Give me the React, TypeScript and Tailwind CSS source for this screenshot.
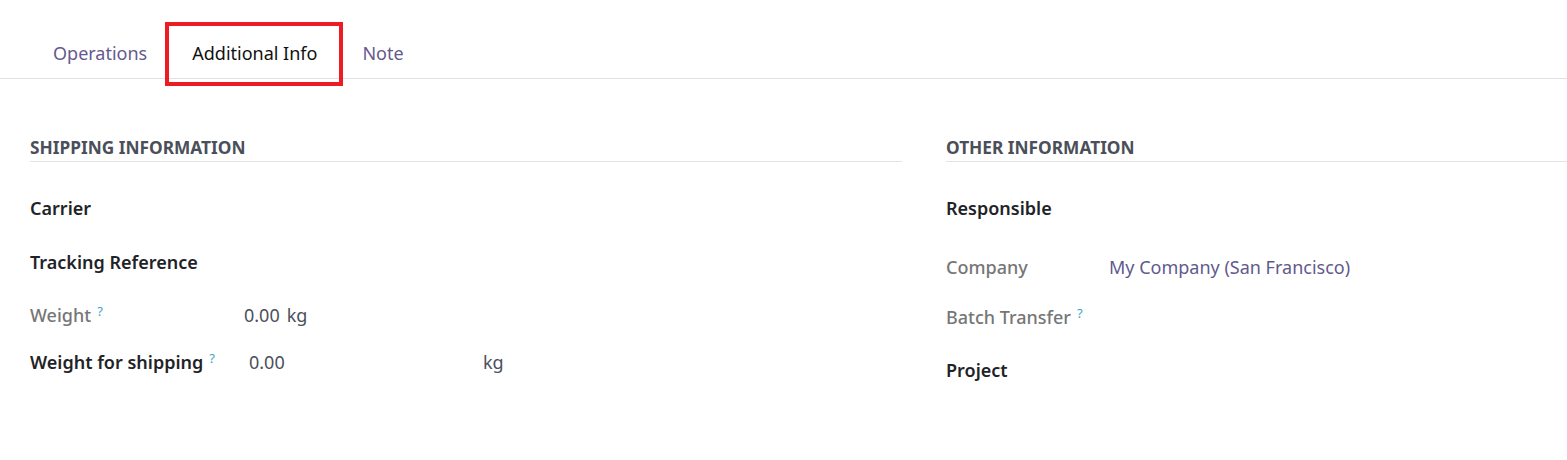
import React from "react";

function Help() {
  return <sup className="ml-[6px] text-[13px] font-normal text-[#3fa3c9]">?</sup>;
}

export default function App() {
  return (
    <div className="relative w-[1567px] h-[460px] overflow-hidden bg-white font-['Noto_Sans',sans-serif] text-[18px]">
      {/* Tabs */}
      <div className="flex h-[79px] items-end border-b border-[#dee2e6] pl-[31px]">
        <div className="flex h-[50px] items-center px-[22px] text-[18px] text-[#65598c]">Operations</div>
        <div className="flex h-[50px] items-center px-[23px] text-[18px] text-[#111111]">Additional Info</div>
        <div className="flex h-[50px] items-center px-[22px] text-[18px] text-[#65598c]">Note</div>
      </div>
      {/* annotation box */}
      <div className="absolute left-[165px] top-[22px] h-[64px] w-[178px] border-4 border-[#ed1c24]" />

      <div className="grid grid-cols-[872px_1fr] gap-x-[44px] pl-[30px] pt-[56px]">
        {/* Shipping */}
        <div>
          <div className="border-b border-[#e2e4e8] pb-px pt-px text-[17.3px] font-bold leading-6 text-[#4a4f59]">
            SHIPPING INFORMATION
          </div>
          <div className="mt-[34px] flex h-6 items-center leading-6 font-semibold text-[#1f2328]">Carrier</div>
          <div className="mt-[30px] flex h-6 items-center leading-6 font-semibold text-[#1f2328]">Tracking Reference</div>
          <div className="mt-[29px] flex h-6 items-center leading-6">
            <div className="w-[214px] font-medium text-[#767676]">
              Weight
              <Help />
            </div>
            <div className="text-[#4b4f5c]">
              0.00<span className="ml-[7px]">kg</span>
            </div>
          </div>
          <div className="mt-[23px] flex h-6 items-center leading-6">
            <div className="w-[219px] font-semibold text-[#1f2328]">
              Weight for shipping
              <Help />
            </div>
            <div className="w-[234px] text-[#4b4f5c]">0.00</div>
            <div className="text-[#4b4f5c]">kg</div>
          </div>
        </div>

        {/* Other */}
        <div>
          <div className="border-b border-[#e2e4e8] pb-px pt-px text-[17.3px] font-bold leading-6 text-[#4a4f59]">
            OTHER INFORMATION
          </div>
          <div className="mt-[34px] flex h-6 items-center leading-6 font-semibold text-[#1f2328]">Responsible</div>
          <div className="mt-[35px] flex h-6 items-center leading-6">
            <div className="w-[163px] font-medium text-[#767676]">Company</div>
            <div className="text-[#5f5a8e]">My Company (San Francisco)</div>
          </div>
          <div className="mt-[26px] flex h-6 items-center leading-6">
            <div className="font-medium text-[#767676]">
              Batch Transfer
              <Help />
            </div>
          </div>
          <div className="mt-[29px] flex h-6 items-center leading-6 font-semibold text-[#1f2328]">Project</div>
        </div>
      </div>
    </div>
  );
}
